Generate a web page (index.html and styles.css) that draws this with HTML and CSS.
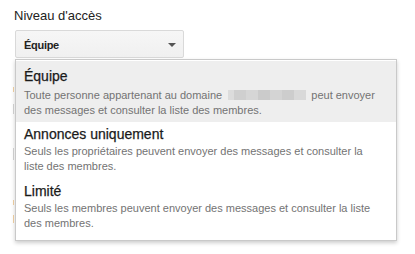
FILE: index.html
```html
<!DOCTYPE html>
<html lang="fr">
<head>
<meta charset="utf-8">
<title>Niveau d'accès</title>
<link rel="stylesheet" href="styles.css">
</head>
<body>
<div class="page">
  <div class="label">Niveau d'accès</div>
  <div class="field">
    <div class="select">
      <span class="select-value">Équipe</span>
      <span class="select-arrow"></span>
    </div>
    <div class="behind">
      <span class="mark mark-o1"></span>
      <span class="mark mark-g1"></span>
      <span class="mark mark-g2"></span>
      <span class="mark mark-o2"></span>
      <span class="mark mark-o3"></span>
    </div>
    <div class="menu">
      <div class="item is-active">
        <div class="item-title">Équipe</div>
        <div class="item-desc">Toute personne appartenant au domaine <span class="redacted"></span> peut envoyer des messages et consulter la liste des membres.</div>
      </div>
      <div class="item">
        <div class="item-title">Annonces uniquement</div>
        <div class="item-desc">Seuls les propriétaires peuvent envoyer des messages et consulter la liste des membres.</div>
      </div>
      <div class="item">
        <div class="item-title">Limité</div>
        <div class="item-desc">Seuls les membres peuvent envoyer des messages et consulter la liste des membres.</div>
      </div>
    </div>
  </div>
</div>
</body>
</html>
```
FILE: styles.css
```css
html, body {
  margin: 0;
  padding: 0;
  background: #fff;
}
body {
  font-family: "Liberation Sans", Arial, sans-serif;
  color: #222;
}
.page {
  padding: 8px 0 0 15px;
}
.label {
  font-size: 13px;
  line-height: 16px;
  margin-left: -1px;
  margin-bottom: 6px;
  color: #222;
}
.field {
  position: relative;
  width: 382px;
}
.select {
  box-sizing: border-box;
  width: 169px;
  height: 28px;
  border: 1px solid #d9d9d9;
  border-radius: 2px;
  background: linear-gradient(#f6f6f6, #f0f0f0);
  display: flex;
  align-items: center;
  justify-content: space-between;
  padding: 0 7px 0 8px;
}
.select-value {
  font-size: 11px;
  font-weight: bold;
  color: #222;
  letter-spacing: -0.3px;
  padding-top: 1px;
}
.select-arrow {
  width: 0;
  height: 0;
  border-left: 4px solid transparent;
  border-right: 4px solid transparent;
  border-top: 4px solid #555;
  margin-top: 1px;
}
.behind {
  position: relative;
  height: 190px;
  margin-left: -2px;
}
.mark {
  position: absolute;
  left: 0;
  width: 1px;
}
.mark-o1 { top: 29px; height: 5px; background: #f3d2a4; }
.mark-g1 { top: 46px; height: 10px; background: #d6d6d6; }
.mark-g2 { top: 90px; height: 12px; background: #d6d6d6; }
.mark-o2 { top: 142px; height: 5px; background: #f3d2a4; }
.mark-o3 { top: 157px; height: 8px; background: #f3d2a4; }
.menu {
  position: absolute;
  top: 29px;
  left: 0;
  width: 382px;
  box-sizing: border-box;
  background: #fff;
  border: 1px solid #c9c9c9;
  box-shadow: 0 2px 4px rgba(0, 0, 0, 0.2);
  padding: 1px 0 4px;
}
.item {
  padding: 3px 13px 5px 8px;
}
.item.is-active {
  background: #eeeeee;
  padding-top: 6px;
  padding-bottom: 4px;
}
.item-title {
  font-size: 14px;
  line-height: 18px;
  color: #1a1a1a;
  -webkit-text-stroke: 0.25px #1a1a1a;
}
.item-desc {
  font-size: 11px;
  line-height: 15px;
  color: #737373;
  margin-top: 1px;
}
.item.is-active .item-desc {
  margin-top: 3px;
}
.redacted {
  display: inline-block;
  width: 78px;
  height: 10px;
  margin: 0 2px 0 3px;
  vertical-align: -1px;
  background: linear-gradient(90deg,
    #dcdcdc 0, #dcdcdc 6px,
    #cfcfcf 6px, #cfcfcf 18px,
    #d6d6d6 18px, #d6d6d6 30px,
    #cbcbcb 30px, #cbcbcb 42px,
    #d4d4d4 42px, #d4d4d4 54px,
    #cdcdcd 54px, #cdcdcd 66px,
    #d9d9d9 66px, #d9d9d9 78px);
}
```
